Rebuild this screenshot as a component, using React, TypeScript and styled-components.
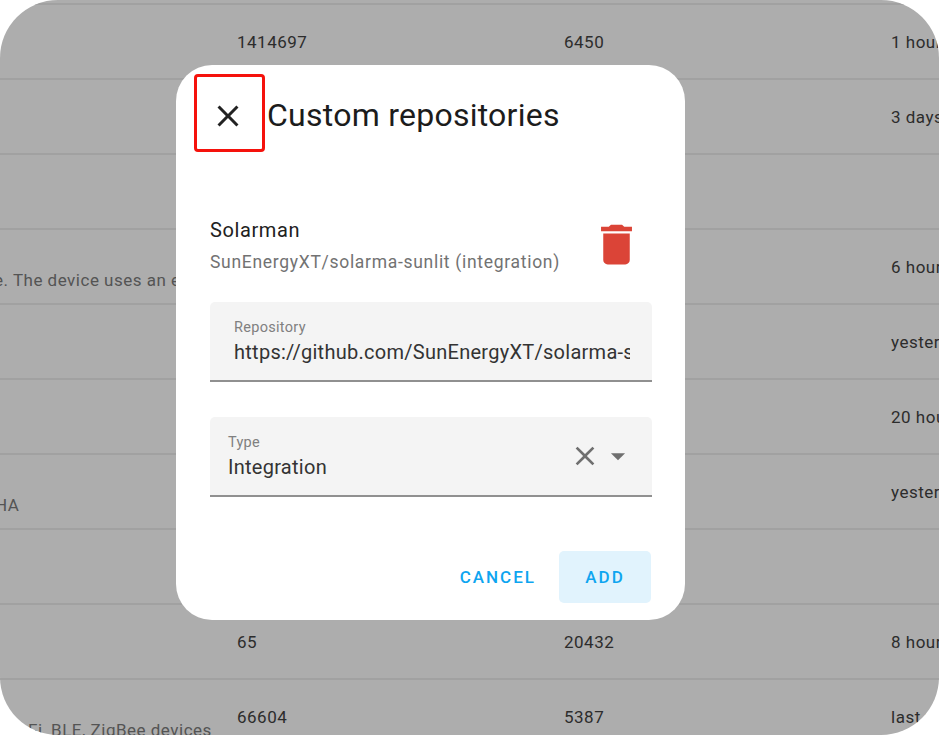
import { createGlobalStyle } from "styled-components";
import styled from "styled-components";

const GlobalStyle = createGlobalStyle`
  html, body {
    margin: 0;
    background: #fff;
    font-family: Roboto, "Liberation Sans", sans-serif;
  }
`;

const Frame = styled.div`
  position: relative;
  width: 939px;
  height: 735px;
  overflow: hidden;
  border-radius: 58px;
  background: #adadad;
`;

const Table = styled.div`
  margin-top: -70px;
`;

const Row = styled.div`
  display: grid;
  grid-template-columns: 237px 327px 327px 1fr;
  align-items: center;
  height: 73px;
  border-bottom: 2px solid #a1a1a1;
  font-size: 17px;
  letter-spacing: 0.5px;
  color: #2c2c2c;
  white-space: nowrap;
`;

const Description = styled.div<{ $shift?: number }>`
  padding-top: 26px;
  margin-left: ${(p) => p.$shift ?? 0}px;
  color: #545454;
`;

const Cell = styled.div``;

const Overlay = styled.div`
  position: absolute;
  top: 65px;
  left: 176px;
`;

const Dialog = styled.div`
  display: flex;
  flex-direction: column;
  box-sizing: border-box;
  width: 509px;
  height: 555px;
  padding-top: 9px;
  background: #fff;
  border-radius: 36px;
  color: #1c1c1c;
`;

const Header = styled.div`
  display: flex;
  align-items: center;
  padding-left: 18px;
  gap: 2px;
`;

const CloseBox = styled.div`
  display: flex;
  align-items: center;
  justify-content: center;
  box-sizing: border-box;
  width: 71px;
  height: 78px;
  padding: 6px 3px 0 0;
  border: 3px solid #f5120c;
  border-radius: 4px;
`;

const Title = styled.h2`
  margin: 4px 0 0;
  font-size: 32px;
  font-weight: 400;
  letter-spacing: 0.25px;
  color: #1c1c1c;
`;

const Repo = styled.div`
  display: flex;
  align-items: center;
  justify-content: space-between;
  margin-top: 67px;
  padding: 0 42px 0 34px;
`;

const RepoText = styled.div`
  display: flex;
  flex-direction: column;
  gap: 11px;
`;

const RepoName = styled.div`
  font-size: 20px;
  line-height: 22px;
  letter-spacing: 0.6px;
  color: #212121;
`;

const RepoPath = styled.div`
  font-size: 17.5px;
  line-height: 20px;
  letter-spacing: 0.7px;
  color: #727272;
`;

const TrashIcon = styled.div`
  display: flex;
  margin-top: -2px;
`;

const Fields = styled.div`
  display: flex;
  flex-direction: column;
  gap: 35px;
  margin: 30px 33px 0 34px;
`;

const Field = styled.div<{ $inset: number }>`
  display: flex;
  align-items: center;
  box-sizing: border-box;
  height: 80px;
  padding: 0 22px 0 ${(p) => p.$inset}px;
  background: #f4f4f4;
  border-bottom: 2px solid #909090;
  border-radius: 5px 5px 0 0;
`;

const FieldBody = styled.div`
  flex: 1;
  min-width: 0;
  padding-top: 4px;
`;

const FieldLabel = styled.div`
  font-size: 14.5px;
  line-height: 17px;
  letter-spacing: 0.3px;
  color: #808080;
`;

const FieldValue = styled.div`
  overflow: hidden;
  white-space: nowrap;
  margin-top: 1.5px;
  font-size: 20px;
  line-height: 29px;
  letter-spacing: 0.27px;
  color: #333;
`;

const FieldIcons = styled.div`
  display: flex;
  align-items: center;
  margin-right: -5px;
`;

const Actions = styled.div`
  display: flex;
  align-items: center;
  justify-content: flex-end;
  gap: 23px;
  margin-top: 54px;
  padding-right: 34px;
`;

const Action = styled.div<{ $filled?: boolean }>`
  display: flex;
  align-items: center;
  justify-content: center;
  box-sizing: border-box;
  width: ${(p) => (p.$filled ? "92px" : "auto")};
  height: 52px;
  border-radius: 5px;
  background: ${(p) => (p.$filled ? "#e1f3fd" : "transparent")};
  color: #0ea5f0;
  font-size: 17px;
  font-weight: 500;
  letter-spacing: 2px;
`;

const Icon = ({ d, size, color }: { d: string; size: number; color: string }) => (
  <svg width={size} height={size} viewBox="0 0 24 24" fill={color}>
    <path d={d} />
  </svg>
);

const CLOSE =
  "M19,6.41L17.59,5L12,10.59L6.41,5L5,6.41L10.59,12L5,17.59L6.41,19L12,13.41L17.59,19L19,17.59L13.41,12L19,6.41Z";
const TRASH =
  "M19,4H15.5L14.5,3H9.5L8.5,4H5V6H19M6,19A2,2 0 0,0 8,21H16A2,2 0 0,0 18,19V7H6V19Z";
const MENU_DOWN = "M7,10L12,15L17,10H7Z";

const rows: { desc?: string; shift?: number; a?: string; b?: string; c?: string }[] = [
  { a: "1414697", b: "6450", c: "1 hours ago" },
  { c: "3 days ago" },
  {},
  { desc: "e. The device uses an external sensor", shift: -6, c: "6 hours ago" },
  { c: "yesterday" },
  { c: "20 hours ago" },
  { desc: "HA", shift: -5, c: "yesterday" },
  {},
  { a: "65", b: "20432", c: "8 hours ago" },
  { desc: "Fi, BLE, ZigBee devices", shift: 28, a: "66604", b: "5387", c: "last week" },
];

function App() {
  return (
    <>
      <GlobalStyle />
      <Frame>
        <Table>
          <Row />
          {rows.map((r, i) => (
            <Row key={i}>
              <Description $shift={r.shift}>{r.desc}</Description>
              <Cell>{r.a}</Cell>
              <Cell>{r.b}</Cell>
              <Cell>{r.c}</Cell>
            </Row>
          ))}
        </Table>
        <Overlay>
          <Dialog>
            <Header>
              <CloseBox>
                <Icon d={CLOSE} size={36} color="#222" />
              </CloseBox>
              <Title>Custom repositories</Title>
            </Header>
            <Repo>
              <RepoText>
                <RepoName>Solarman</RepoName>
                <RepoPath>SunEnergyXT/solarma-sunlit (integration)</RepoPath>
              </RepoText>
              <TrashIcon>
                <Icon d={TRASH} size={53} color="#db4437" />
              </TrashIcon>
            </Repo>
            <Fields>
              <Field $inset={24}>
                <FieldBody>
                  <FieldLabel>Repository</FieldLabel>
                  <FieldValue>https://github.com/SunEnergyXT/solarma-sunlit</FieldValue>
                </FieldBody>
              </Field>
              <Field $inset={18}>
                <FieldBody>
                  <FieldLabel>Type</FieldLabel>
                  <FieldValue>Integration</FieldValue>
                </FieldBody>
                <FieldIcons>
                  <Icon d={CLOSE} size={32} color="#6f6f6f" />
                  <Icon d={MENU_DOWN} size={34} color="#6f6f6f" />
                </FieldIcons>
              </Field>
            </Fields>
            <Actions>
              <Action>CANCEL</Action>
              <Action $filled>ADD</Action>
            </Actions>
          </Dialog>
        </Overlay>
      </Frame>
    </>
  );
}

export default App;
